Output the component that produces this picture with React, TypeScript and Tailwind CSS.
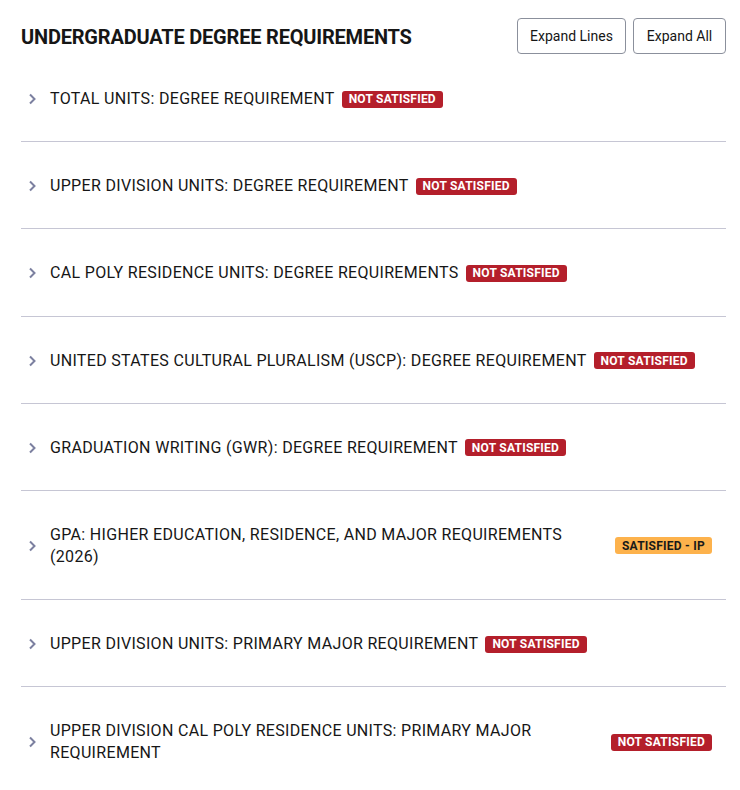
import React from "react";

type Req = { title: string; status: "not" | "ip" };

const REQUIREMENTS: Req[] = [
  { title: "TOTAL UNITS: DEGREE REQUIREMENT", status: "not" },
  { title: "UPPER DIVISION UNITS: DEGREE REQUIREMENT", status: "not" },
  { title: "CAL POLY RESIDENCE UNITS: DEGREE REQUIREMENTS", status: "not" },
  { title: "UNITED STATES CULTURAL PLURALISM (USCP): DEGREE REQUIREMENT", status: "not" },
  { title: "GRADUATION WRITING (GWR): DEGREE REQUIREMENT", status: "not" },
  { title: "GPA: HIGHER EDUCATION, RESIDENCE, AND MAJOR REQUIREMENTS (2026)", status: "ip" },
  { title: "UPPER DIVISION UNITS: PRIMARY MAJOR REQUIREMENT", status: "not" },
  { title: "UPPER DIVISION CAL POLY RESIDENCE UNITS: PRIMARY MAJOR REQUIREMENT", status: "not" },
];

function Chevron() {
  return (
    <svg className="w-[8px] h-[12px] shrink-0 text-[#7c80a0]" viewBox="0 0 8 12" fill="none" stroke="currentColor" strokeWidth={2}>
      <path d="M2 1.5l4.5 4.5L2 10.5" />
    </svg>
  );
}

function Badge({ status }: { status: Req["status"] }) {
  if (status === "ip") {
    return (
      <span className="shrink-0 rounded-[3px] bg-[#fdb24c] px-[7px] h-[17px] flex items-center text-[12px] font-bold tracking-[0.02em] text-[#1a1a1a]">
        SATISFIED - IP
      </span>
    );
  }
  return (
    <span className="shrink-0 rounded-[3px] bg-[#b41f2b] px-[7px] h-[17px] flex items-center text-[12px] font-bold tracking-[0.02em] text-white">
      NOT SATISFIED
    </span>
  );
}

export default function App() {
  return (
    <div className="w-[740px] min-h-[790px] bg-white pl-[21px] pr-[14px] pt-[18px] text-[#161616]" style={{ fontFamily: "Roboto, 'Liberation Sans', sans-serif" }}>
      {/* Header */}
      <div className="flex items-center justify-between h-[37px]">
        <h1 className="text-[20px] font-bold tracking-[-0.01em] pt-[1px]">UNDERGRADUATE DEGREE REQUIREMENTS</h1>
        <div className="flex gap-[7px] self-start">
          <button className="h-[36px] w-[109px] rounded-[4px] border border-[#8b909c] text-[14px] text-[#161616] bg-white">
            Expand Lines
          </button>
          <button className="h-[36px] w-[93px] rounded-[4px] border border-[#8b909c] text-[14px] text-[#161616] bg-white">
            Expand All
          </button>
        </div>
      </div>

      {/* Requirement rows */}
      <div className="flex flex-col">
        {REQUIREMENTS.map((req, idx) => (
          <div
            key={idx}
            className={`flex items-center pt-[33px] pb-[31.2px] pl-[7px] pr-[14px] ${idx < REQUIREMENTS.length - 1 ? "border-b border-[#c6c6d4]" : ""}`}
          >
            <Chevron />
            <div className="flex items-center gap-[7px] ml-[14px] flex-1 min-w-0">
              <span className="text-[16px] leading-[22px] tracking-[0.02em]">{req.title}</span>
              <Badge status={req.status} />
            </div>
          </div>
        ))}
      </div>
    </div>
  );
}
